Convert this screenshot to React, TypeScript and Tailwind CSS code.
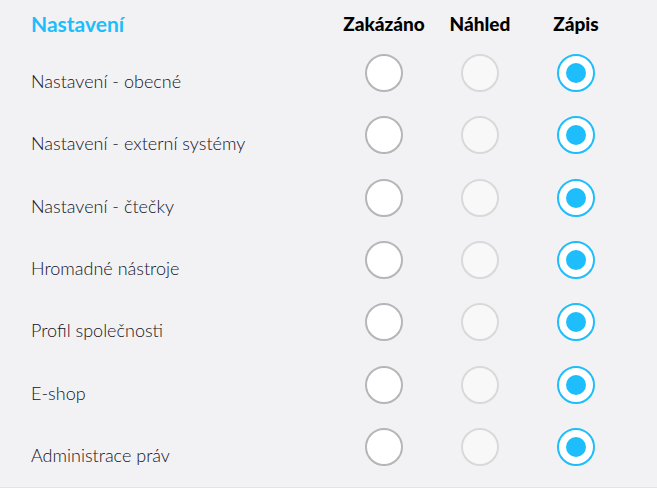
import React, { useState } from 'react';

type Level = 'none' | 'view' | 'write';

const sections = [
  'Nastavení - obecné',
  'Nastavení - externí systémy',
  'Nastavení - čtečky',
  'Hromadné nástroje',
  'Profil společnosti',
  'E-shop',
  'Administrace práv',
];

function Radio({ checked, disabled, onClick }: { checked: boolean; disabled?: boolean; onClick?: () => void }) {
  if (checked) {
    return (
      <button
        type="button"
        onClick={onClick}
        className="flex h-[38px] w-[38px] items-center justify-center rounded-full border-2 border-[#1ebdfb] bg-white"
      >
        <span className="h-[20px] w-[20px] rounded-full bg-[#1ebdfb]" />
      </button>
    );
  }
  return (
    <button
      type="button"
      onClick={onClick}
      disabled={disabled}
      className={
        disabled
          ? 'h-[38px] w-[38px] rounded-full border-2 border-[#d9d9dc] bg-[#f8f8f8]'
          : 'h-[38px] w-[38px] rounded-full border-2 border-[#b6b6ba] bg-white'
      }
    />
  );
}

export default function App() {
  const [levels, setLevels] = useState<Level[]>(sections.map(() => 'write'));

  const setLevel = (index: number, level: Level) => {
    setLevels(levels.map((l, i) => (i === index ? level : l)));
  };

  return (
    <div className="h-[488px] w-[657px] bg-[#f2f2f4] pl-[31px] pr-[33px] font-['Lato',sans-serif] border-b border-[#e4e4e6]">
      <div className="grid h-[42px] grid-cols-[1fr_96px_96px_96px] pt-[12px]">
        <div className="text-[21px] leading-6 font-bold text-[#1ebdfb]">Nastavení</div>
        <div className="text-center text-[19px] leading-6 font-black text-black">Zakázáno</div>
        <div className="text-center text-[19px] leading-6 font-black text-black">Náhled</div>
        <div className="text-center text-[19px] leading-6 font-black text-black">Zápis</div>
      </div>
      {sections.map((name, i) => (
        <div key={name} className="grid h-[62.33px] grid-cols-[1fr_96px_96px_96px] items-center">
          <div className="pt-4 text-[18px] leading-6 font-light text-[#15121f]">{name}</div>
          <div className="flex justify-center">
            <Radio checked={levels[i] === 'none'} onClick={() => setLevel(i, 'none')} />
          </div>
          <div className="flex justify-center">
            <Radio checked={levels[i] === 'view'} disabled />
          </div>
          <div className="flex justify-center">
            <Radio checked={levels[i] === 'write'} onClick={() => setLevel(i, 'write')} />
          </div>
        </div>
      ))}
    </div>
  );
}
